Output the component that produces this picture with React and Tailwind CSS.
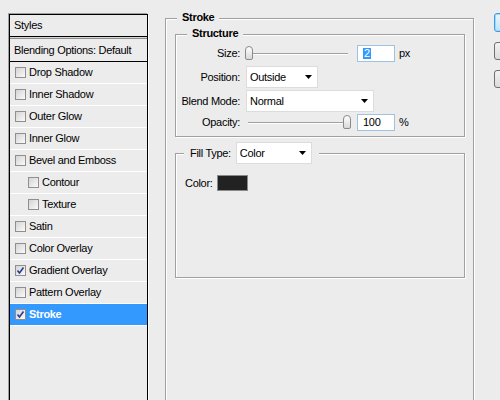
import React from 'react'

const styleRows = [
  { label: 'Drop Shadow' },
  { label: 'Inner Shadow' },
  { label: 'Outer Glow' },
  { label: 'Inner Glow' },
  { label: 'Bevel and Emboss' },
  { label: 'Contour', indent: true },
  { label: 'Texture', indent: true },
  { label: 'Satin' },
  { label: 'Color Overlay' },
  { label: 'Gradient Overlay', checked: true },
  { label: 'Pattern Overlay' },
  { label: 'Stroke', checked: true, active: true },
]

function Checkbox({ checked }) {
  return (
    <span className="flex h-[11px] w-[11px] shrink-0 items-center justify-center border border-[#8f8f8f] bg-gradient-to-br from-[#d4d4d4] to-[#fafafa]">
      {checked && (
        <svg width="9" height="9" viewBox="0 0 9 9">
          <path d="M1.5 4.5 L3.5 7 L7.5 1.5" fill="none" stroke="#2a3b8f" strokeWidth="1.6" />
        </svg>
      )}
    </span>
  )
}

function StyleRow({ label, checked, indent, active }) {
  return (
    <div
      className={`flex h-[22px] items-center border-b border-white ${indent ? 'pl-[18px]' : 'pl-[5px]'} ${
        active ? 'bg-[#3399ff] font-bold text-white' : 'text-black'
      }`}
    >
      <Checkbox checked={checked} />
      <span className="ml-[3px]">{label}</span>
    </div>
  )
}

function Slider({ value }) {
  // thumb sits at the left for the size slider and at the far end for opacity
  return (
    <div className="relative h-[16px] w-[107px]">
      <div className="absolute left-[3px] right-[4px] top-[8px] h-[2px] border-t border-[#a0a0a0] border-b border-b-white" />
      <div
        className={`absolute top-[1px] h-[14px] w-[8px] rounded-t-[4px] rounded-b-[2px] border border-[#8a8a8a] bg-gradient-to-b from-white to-[#d8d8d8] ${
          value === 'max' ? 'left-[98px]' : 'left-0'
        }`}
      />
    </div>
  )
}

function NumberField({ children }) {
  return (
    <div className="flex h-[17px] w-[38px] items-center border border-[#9cc3e6] bg-white pl-[5px]">
      {children}
    </div>
  )
}

function Select({ value, width }) {
  return (
    <div
      className={`flex h-[22px] items-center justify-between border border-[#dcdcdc] bg-white pl-[3px] pr-[5px] ${width}`}
    >
      <span>{value}</span>
      <svg width="7" height="4" viewBox="0 0 7 4">
        <path d="M0 0 H7 L3.5 4 Z" fill="#000" />
      </svg>
    </div>
  )
}

function Label({ children }) {
  return <span className="w-[65px] shrink-0 pr-[1px] text-right">{children}</span>
}

export default function App() {
  return (
    <div
      className="flex h-[400px] w-[500px] overflow-hidden bg-[#ececec] text-[11px] leading-none tracking-[-0.3px] text-black"
      style={{ fontFamily: '"Liberation Sans", Arial, sans-serif' }}
    >
      {/* style list */}
      <div className="ml-[9px] mt-[14px] h-[400px] w-[139px] shrink-0 border border-black shadow-[-1px_-1px_0_#a0a0a0,1px_1px_0_#fff]">
        <div className="flex h-[22px] items-center border-b border-black pl-[4px]">Styles</div>
        <div className="h-[1px] bg-[#d4d4d4]" />
        <div className="h-[1px] bg-[#8f8f8f]" />
        <div className="flex h-[23px] items-center border-b border-black pl-[4px]">Blending Options: Default</div>
        {styleRows.map((row) => (
          <StyleRow key={row.label} {...row} />
        ))}
      </div>

      {/* stroke settings */}
      <div className="relative ml-[17px] mt-[18px] h-[400px] w-[309px] shrink-0 border border-[#a0a0a0] pl-[9px] pt-[15px] shadow-[inset_1px_1px_0_#fff,1px_1px_0_#fff]">
        <span className="absolute -top-[7px] left-[11px] bg-[#ececec] px-[5px] font-bold">Stroke</span>

        <div className="relative flex h-[103px] w-[290px] flex-col border border-[#a0a0a0] shadow-[inset_1px_1px_0_#fff,1px_1px_0_#fff]">
          <span className="absolute -top-[7px] left-[11px] bg-[#ececec] px-[5px] font-bold">Structure</span>

          <div className="mt-[10px] flex h-[16px] items-center">
            <Label>Size:</Label>
            <div className="ml-[4px]">
              <Slider value="min" />
            </div>
            <div className="ml-[5px]">
              <NumberField>
                <span className="bg-[#3399ff] px-[1px] text-white">2</span>
              </NumberField>
            </div>
            <span className="ml-[4px]">px</span>
          </div>

          <div className="mt-[5px] flex h-[22px] items-center">
            <Label>Position:</Label>
            <div className="ml-[5px]">
              <Select value="Outside" width="w-[72px]" />
            </div>
          </div>

          <div className="mt-[2px] flex h-[22px] items-center">
            <Label>Blend Mode:</Label>
            <div className="ml-[5px]">
              <Select value="Normal" width="w-[128px]" />
            </div>
          </div>

          <div className="mt-[2px] flex h-[16px] items-center">
            <Label>Opacity:</Label>
            <div className="ml-[4px]">
              <Slider value="max" />
            </div>
            <div className="ml-[5px]">
              <NumberField>100</NumberField>
            </div>
            <span className="ml-[4px]">%</span>
          </div>
        </div>

        <div className="relative mt-[16px] h-[125px] w-[290px] border border-[#a0a0a0] pl-[9px] pt-[21px] shadow-[inset_1px_1px_0_#fff,1px_1px_0_#fff]">
          <div className="absolute -top-[12px] left-[8px] flex h-[22px] items-center bg-[#ececec] pl-[6px] pr-[7px]">
            <span>Fill Type:</span>
            <div className="ml-[5px]">
              <Select value="Color" width="w-[76px]" />
            </div>
          </div>
          <div className="flex h-[16px] items-center">
            <span>Color:</span>
            <div className="ml-[4px] h-[16px] w-[31px] border border-[#8a8a8a] bg-[#222222]" />
          </div>
        </div>
      </div>

      {/* dialog buttons */}
      <div className="ml-[20px] mt-[13px] flex shrink-0 flex-col gap-[10px]">
        <div className="h-[19px] w-[80px] rounded-[3px] border border-[#3c9be6] bg-gradient-to-b from-[#eaf6fd] to-[#bee4f8] shadow-[inset_0_0_0_1px_#9ed8f8]" />
        <div className="h-[18px] w-[80px] rounded-[3px] border border-[#707070] bg-gradient-to-b from-[#f2f2f2] to-[#dcdcdc]" />
        <div className="h-[18px] w-[80px] rounded-[3px] border border-[#707070] bg-gradient-to-b from-[#f2f2f2] to-[#dcdcdc]" />
      </div>
    </div>
  )
}
